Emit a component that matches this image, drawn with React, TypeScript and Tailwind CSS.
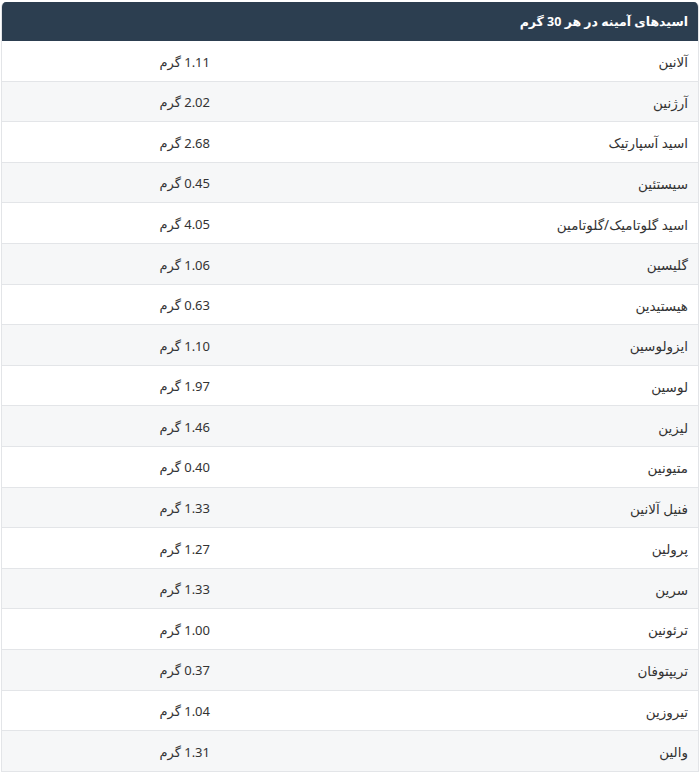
import React from 'react';

const rows = [
  { name: 'آلانین', value: '1.11 گرم' },
  { name: 'آرژنین', value: '2.02 گرم' },
  { name: 'اسید آسپارتیک', value: '2.68 گرم' },
  { name: 'سیستئین', value: '0.45 گرم' },
  { name: 'اسید گلوتامیک/گلوتامین', value: '4.05 گرم' },
  { name: 'گلیسین', value: '1.06 گرم' },
  { name: 'هیستیدین', value: '0.63 گرم' },
  { name: 'ایزولوسین', value: '1.10 گرم' },
  { name: 'لوسین', value: '1.97 گرم' },
  { name: 'لیزین', value: '1.46 گرم' },
  { name: 'متیونین', value: '0.40 گرم' },
  { name: 'فنیل آلانین', value: '1.33 گرم' },
  { name: 'پرولین', value: '1.27 گرم' },
  { name: 'سرین', value: '1.33 گرم' },
  { name: 'ترئونین', value: '1.00 گرم' },
  { name: 'تریپتوفان', value: '0.37 گرم' },
  { name: 'تیروزین', value: '1.04 گرم' },
  { name: 'والین', value: '1.31 گرم' },
];

export default function App() {
  return (
    <div
      dir="rtl"
      className="min-h-screen bg-white pt-[2px] px-[1px] text-[#333]"
      style={{ fontFamily: '"Noto Sans", "DejaVu Sans", sans-serif' }}
    >
      <div className="rounded-t-[5px] overflow-hidden border-x border-[#e3e5e8]">
        <div className="h-[39px] bg-[#2c3e50] flex items-center px-[10px] pt-[2px] text-white text-[12.5px] font-bold">
          اسیدهای آمینه در هر 30 گرم
        </div>
        {rows.map((r, i) => (
          <div
            key={r.name}
            className={`flex items-center h-[40.6px] pt-[3px] border-b border-[#e3e5e8] text-[13.5px] ${
              i % 2 === 1 ? 'bg-[#f6f7f8]' : 'bg-white'
            }`}
          >
            <div className="w-[478px] px-[10px]">{r.name}</div>
            <div className="flex-1 px-[10px] text-[13px]">{r.value}</div>
          </div>
        ))}
      </div>
    </div>
  );
}
